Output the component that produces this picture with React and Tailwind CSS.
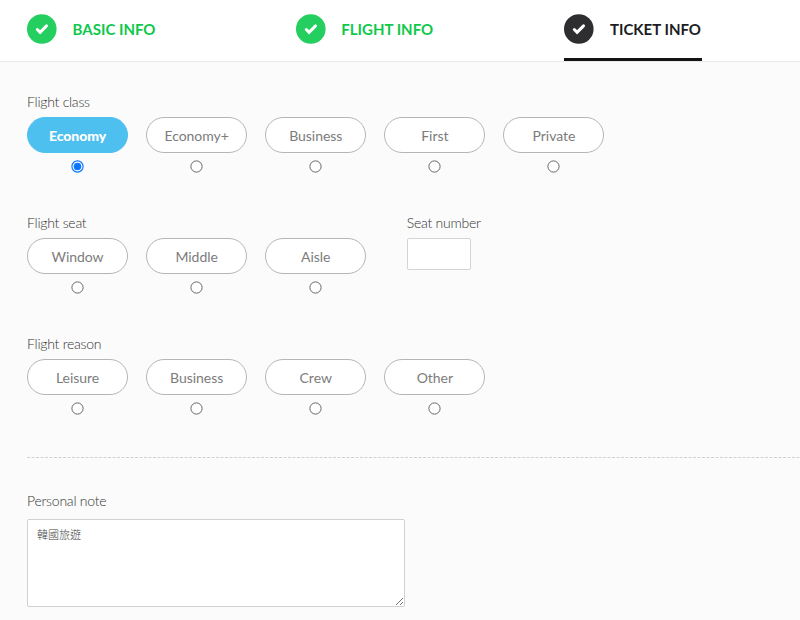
import React from "react";

function StepBadge({ fill }) {
  return (
    <svg width="30" height="30" viewBox="0 0 30 30" className="shrink-0">
      <circle cx="14.8" cy="15" r="14.8" fill={fill} />
      <path d="M10.3 15.5L13.1 18.3L19.5 11.9" fill="none" stroke="#fff" strokeWidth="3" strokeLinecap="round" strokeLinejoin="miter" />
    </svg>
  );
}

function Step({ label, fill, className }) {
  return (
    <div className={`flex h-[61px] pt-[14px] ${className}`}>
      <StepBadge fill={fill} />
      <span className="ml-[15.6px] text-[15px] leading-[31px] font-bold whitespace-nowrap">{label}</span>
    </div>
  );
}

function Label({ children }) {
  return <div className="h-[24px] text-[14px] leading-[18px] font-light tracking-[-0.24px] whitespace-nowrap text-[#333]">{children}</div>;
}

function Option({ label, checked }) {
  return (
    <label className="flex w-[101.1px] flex-col items-center">
      <span
        className={`flex h-[36px] w-full items-center justify-center rounded-full border pt-px text-[14px] ${
          checked ? "border-[#4dc0f0] bg-[#4dc0f0] font-black tracking-[-0.1px] text-white" : "border-[#b5b5b5] bg-white tracking-[-0.04px] text-[#7c7c7c]"
        }`}
      >
        {label}
      </span>
      <svg width="13" height="13" viewBox="0 0 13 13" className="mt-[7px]">
        <circle cx="6.5" cy="6.5" r="5.6" fill="#fff" stroke={checked ? "#0b76ff" : "#666"} strokeWidth={checked ? 1.2 : 1} />
        {checked && <circle cx="6.5" cy="6.5" r="3.8" fill="#0b76ff" />}
      </svg>
    </label>
  );
}

function OptionGroup({ title, options, selected }) {
  return (
    <div>
      <Label>{title}</Label>
      <div className="flex gap-[18px]">
        {options.map((option) => (
          <Option key={option} label={option} checked={option === selected} />
        ))}
      </div>
    </div>
  );
}

export default function App() {
  return (
    <div className="h-[620px] w-[800px] overflow-hidden bg-[#fbfbfb] font-[Lato,'Noto_Sans_CJK_TC',sans-serif]">
      <header className="flex h-[62px] border-b border-[#e9e9e9] bg-white pl-[27px]">
        <Step label="BASIC INFO" fill="#24ce5f" className="w-[268.7px] text-[#0fc84c]" />
        <Step label="FLIGHT INFO" fill="#24ce5f" className="w-[268.7px] text-[#0fc84c]" />
        <Step label="TICKET INFO" fill="#2e2e30" className="w-[138px] border-b-[3px] border-[#141416] text-[#1d1d1f]" />
      </header>

      <main className="pt-[31px] pl-[27px]">
        <div className="h-[121px]">
          <OptionGroup title="Flight class" options={["Economy", "Economy+", "Business", "First", "Private"]} selected="Economy" />
        </div>
        <div className="flex h-[121px] gap-[40.5px]">
          <OptionGroup title="Flight seat" options={["Window", "Middle", "Aisle"]} />
          <div>
            <Label>Seat number</Label>
            <div className="h-[32px] w-[64.5px] rounded-[2px] border border-[#d4d4d4] bg-white" />
          </div>
        </div>
        <div className="h-[122px]">
          <OptionGroup title="Flight reason" options={["Leisure", "Business", "Crew", "Other"]} />
        </div>
        <svg width="773" height="1" className="block">
          <line x1="0" y1="0.5" x2="773" y2="0.5" stroke="#d2d2d2" strokeDasharray="3 1.5" />
        </svg>
        <div className="pt-[34px]">
          <Label>Personal note</Label>
          <div className="mt-[2.5px] flex h-[88px] w-[378px] justify-between rounded-[2px] border border-[#d0d0d0] bg-white pl-[9px]">
            <span className="pt-[7px] text-[11px] leading-4 font-light text-[#444]">韓國旅遊</span>
            <svg width="9" height="9" viewBox="0 0 9 9" className="self-end">
              <path d="M1 8L8 1M5 8L8 5" stroke="#666" strokeWidth="0.9" fill="none" />
            </svg>
          </div>
        </div>
      </main>
    </div>
  );
}
